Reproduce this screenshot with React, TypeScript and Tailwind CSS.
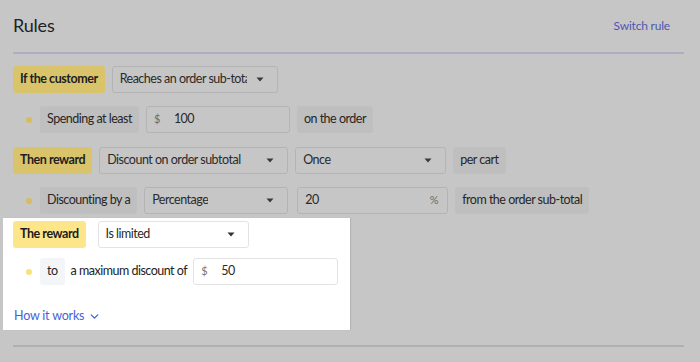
import { ChevronDown } from 'lucide-react';

type Tone = 'dim' | 'lit';

function Caret({ tone }: { tone: Tone }) {
  return (
    <svg width="8" height="5" viewBox="0 0 8 5" className="shrink-0">
      <path d="M0.5 0.5h7L4 4.5z" fill={tone === 'dim' ? '#3a3a3a' : '#333'} />
    </svg>
  );
}

function Badge({ children, tone = 'dim' }: { children: React.ReactNode; tone?: Tone }) {
  const bg = tone === 'dim' ? 'bg-[#d9c46c] text-[#1e1e1e]' : 'bg-[#fde68a] text-[#1a1a1a]';
  return (
    <div className={`h-[27px] px-[7px] flex items-center rounded-[3px] font-bold text-[12.5px] tracking-[-0.45px] ${bg}`}>
      {children}
    </div>
  );
}

function Select({ value, width, tone = 'dim' }: { value: string; width: string; tone?: Tone }) {
  const cls =
    tone === 'dim'
      ? 'border-[#b4b4b4] bg-[#c6c6c6] text-[#2a2a2a]'
      : 'border-[#e3e3e3] bg-white text-[#2a2a2a]';
  return (
    <div className={`h-[27px] ${width} border rounded-[3px] flex items-center justify-between pl-[7px] pr-[13px] ${cls}`}>
      <span className="overflow-hidden whitespace-nowrap mr-[9px]">{value}</span>
      <Caret tone={tone} />
    </div>
  );
}

function Input({
  value,
  width,
  prefix,
  suffix,
  tone = 'dim',
}: {
  value: string;
  width: string;
  prefix?: string;
  suffix?: string;
  tone?: Tone;
}) {
  const cls =
    tone === 'dim'
      ? 'border-[#b4b4b4] bg-[#c6c6c6] text-[#2a2a2a]'
      : 'border-[#e3e3e3] bg-white text-[#2a2a2a]';
  const faint = tone === 'dim' ? 'text-[#6a6a6a]' : 'text-[#777]';
  return (
    <div className={`h-[27px] ${width} border rounded-[3px] flex items-center px-[7px] ${cls}`}>
      {prefix && <span className={`text-[11px] w-[20px] ${faint}`}>{prefix}</span>}
      <span className="flex-1">{value}</span>
      {suffix && <span className={`text-[11px] pr-[2px] ${faint}`}>{suffix}</span>}
    </div>
  );
}

function Label({ children, tone = 'dim' }: { children: React.ReactNode; tone?: Tone }) {
  const cls = tone === 'dim' ? 'bg-[#bfbfbf] text-[#262626]' : 'bg-[#f4f5f8] text-[#222]';
  return (
    <div className={`h-[27px] px-[7px] flex items-center rounded-[3px] whitespace-nowrap ${cls}`}>{children}</div>
  );
}

function Dot({ tone = 'dim' }: { tone?: Tone }) {
  return (
    <div
      className={`w-[6px] h-[6px] rounded-full mr-[1px] ${tone === 'dim' ? 'bg-[#d6be5c]' : 'bg-[#fbe07c]'}`}
    />
  );
}

export default function App() {
  return (
    <div className="w-[700px] h-[362px] overflow-hidden bg-[#c6c6c6] font-['Lato',sans-serif] text-[12.5px] tracking-[-0.5px] text-[#262626]">
      <div className="flex items-center justify-between pl-[13px] pr-[30px] pt-[11px] h-[40px]">
        <h1 className="text-[18px] tracking-[-0.2px] text-[#222]">Rules</h1>
        <a className="text-[12px] tracking-[-0.2px] text-[#5057b3]">Switch rule</a>
      </div>
      <div className="ml-[13px] w-[671px] h-[2px] mt-[12px] bg-[#aeaec2]" />

      <div className="pl-[13px] pt-[12px] flex flex-col">
        <div className="flex items-center gap-[7px]">
          <Badge>If the customer</Badge>
          <Select value="Reaches an order sub-total" width="w-[166px]" />
        </div>

        <div className="flex items-center gap-[7px] pl-[13px] mt-[13px]">
          <Dot />
          <Label>Spending at least</Label>
          <Input value="100" prefix="$" width="w-[144px]" />
          <Label>on the order</Label>
        </div>

        <div className="flex items-center gap-[7px] mt-[14px]">
          <Badge>Then reward</Badge>
          <Select value="Discount on order subtotal" width="w-[189px]" />
          <Select value="Once" width="w-[151px]" />
          <Label>per cart</Label>
        </div>

        <div className="flex items-center gap-[7px] pl-[13px] mt-[13px]">
          <Dot />
          <Label>Discounting by a</Label>
          <Select value="Percentage" width="w-[144px]" />
          <div className="ml-[2px]">
            <Input value="20" suffix="%" width="w-[151px]" />
          </div>
          <Label>from the order sub-total</Label>
        </div>

        <div className="-ml-[10px] mt-[4px] w-[347px] h-[112px] bg-white pl-[10px] pt-[3px] shadow-[1px_0_1px_rgba(0,0,0,0.08)]">
          <div className="flex items-center gap-[12px]">
            <Badge tone="lit">The reward</Badge>
            <Select value="Is limited" width="w-[151px]" tone="lit" />
          </div>
          <div className="flex items-center gap-[6px] pl-[13px] mt-[10px]">
            <Dot tone="lit" />
            <div className="ml-[1px]">
              <Label tone="lit">to</Label>
            </div>
            <span className="text-[#222] whitespace-nowrap">a maximum discount of</span>
            <Input value="50" prefix="$" width="w-[145px]" tone="lit" />
          </div>
          <a className="mt-[22px] ml-[1px] flex items-center gap-[4px] text-[12.5px] tracking-[-0.2px] text-[#4463d8]">
            How it works
            <ChevronDown size={13} strokeWidth={2.5} />
          </a>
        </div>
      </div>

      <div className="ml-[13px] w-[671px] h-[2px] mt-[15px] bg-[#b0b0b0]" />
    </div>
  );
}
